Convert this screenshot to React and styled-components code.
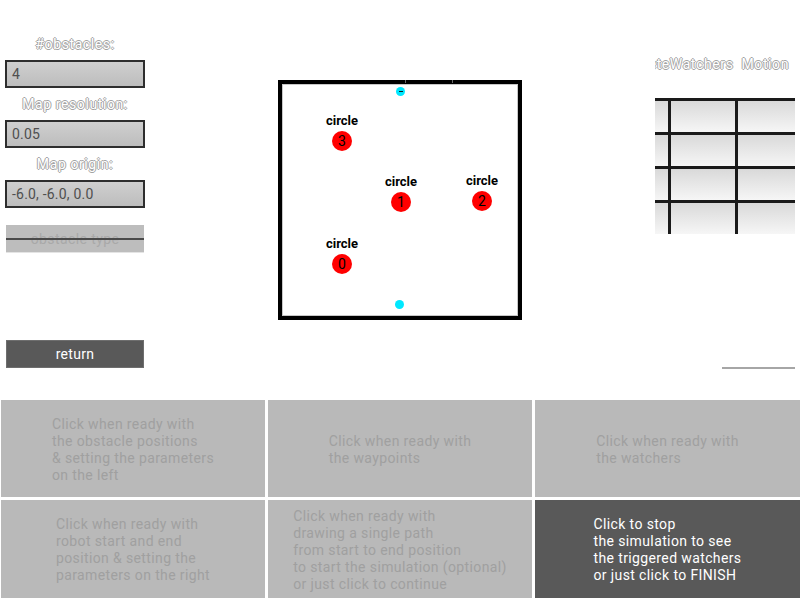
import React from 'react';
import styled, { createGlobalStyle } from 'styled-components';

const GlobalStyle = createGlobalStyle`
  html, body {
    margin: 0;
    padding: 0;
    background: #ffffff;
    font-family: Roboto, "Liberation Sans", sans-serif;
  }
`;

const obstacles = [
  { id: 3, x: 60, y: 57 },
  { id: 1, x: 119, y: 118 },
  { id: 2, x: 200, y: 117 },
  { id: 0, x: 60, y: 180 },
];

const waypoints = [
  { id: 'start', x: 119, y: 8, mark: true },
  { id: 'end', x: 118, y: 221 },
];

const steps = [
  ['Click when ready with', 'the obstacle positions', '& setting the parameters', 'on the left'],
  ['Click when ready with', 'the waypoints'],
  ['Click when ready with', 'the watchers'],
  ['Click when ready with', 'robot start and end', 'position & setting the', 'parameters on the right'],
  ['Click when ready with', 'drawing a single path', 'from start to end position', 'to start the simulation (optional)', 'or just click to continue'],
  ['Click to stop', 'the simulation to see', 'the triggered watchers', 'or just click to FINISH'],
];

const App = () => {
  return (
    <Page>
      <GlobalStyle />
      <Top>
        <LeftPanel>
          <Field>
            <OutlinedLabel>#obstacles:</OutlinedLabel>
            <Input>4</Input>
          </Field>
          <Field>
            <OutlinedLabel>Map resolution:</OutlinedLabel>
            <Input>0.05</Input>
          </Field>
          <Field>
            <OutlinedLabel>Map origin:</OutlinedLabel>
            <Input>-6.0, -6.0, 0.0</Input>
          </Field>
          <TypeButton>obstacle type</TypeButton>
          <ReturnButton>return</ReturnButton>
        </LeftPanel>

        <Center>
          <Map>
            <Tick style={{ left: 123 }} />
            <Tick style={{ left: 170 }} />
            {obstacles.map(o => (
              <Obstacle key={o.id} style={{ left: o.x, top: o.y }}>
                <ObstacleName>circle</ObstacleName>
                <ObstacleDot>{o.id}</ObstacleDot>
              </Obstacle>
            ))}
            {waypoints.map(w => (
              <Waypoint key={w.id} style={{ left: w.x, top: w.y }}>
                {w.mark && <WaypointMark />}
              </Waypoint>
            ))}
          </Map>
        </Center>

        <RightPanel>
          <Header>
            <OutlinedLabel as="span">deleteWatchers</OutlinedLabel>
            <OutlinedLabel as="span">Motion</OutlinedLabel>
          </Header>
          <Table>
            {Array.from({ length: 12 }).map((_, i) => (
              <Cell key={i} />
            ))}
          </Table>
          <Rule />
        </RightPanel>
      </Top>

      <Steps>
        {steps.map((lines, i) => (
          <StepButton key={i} active={i === 5}>
            <StepText>
              {lines.map(l => (
                <div key={l}>{l}</div>
              ))}
            </StepText>
          </StepButton>
        ))}
      </Steps>
    </Page>
  );
};

const Page = styled.div`
  width: 800px;
  height: 600px;
  display: flex;
  flex-direction: column;
  overflow: hidden;
`;

const Top = styled.div`
  height: 399px;
  display: grid;
  grid-template-columns: 150px 1fr 150px;
`;

const LeftPanel = styled.div`
  display: flex;
  flex-direction: column;
  padding-top: 28px;
`;

const Field = styled.div`
  display: flex;
  flex-direction: column;
`;

const OutlinedLabel = styled.div`
  height: 32px;
  display: flex;
  align-items: center;
  justify-content: center;
  font-size: 14px;
  letter-spacing: 0.6px;
  color: #ffffff;
  text-shadow: 1px 0 #a4a4a4, -1px 0 #a4a4a4, 0 1px #a4a4a4, 0 -1px #a4a4a4;
`;

const Input = styled.div`
  margin-left: 5px;
  width: 140px;
  height: 28px;
  box-sizing: border-box;
  border: 2px solid #2e2e2e;
  background: linear-gradient(#cfcfcf, #bdbdbd);
  color: #4f4f4f;
  font-size: 14px;
  letter-spacing: 0.2px;
  display: flex;
  align-items: center;
  padding-left: 5px;
`;

const TypeButton = styled.div`
  position: relative;
  margin: 17px 0 0 6px;
  width: 138px;
  height: 27px;
  background: #bdbdbd;
  border-bottom: 1px solid #e4e4e4;
  color: #a9a9a9;
  font-size: 14px;
  letter-spacing: 0.4px;
  display: flex;
  align-items: center;
  justify-content: center;

  &::after {
    content: '';
    position: absolute;
    left: 0;
    right: 0;
    top: 13px;
    height: 2px;
    background: #4a4a4a;
  }
`;

const ReturnButton = styled.div`
  margin: 87px 0 0 6px;
  width: 138px;
  height: 28px;
  box-sizing: border-box;
  background: #595959;
  border: 1px solid #6e6e6e;
  color: #ffffff;
  font-size: 14px;
  letter-spacing: 0.3px;
  display: flex;
  align-items: center;
  justify-content: center;
`;

const Center = styled.div`
  display: flex;
  justify-content: center;
  padding-top: 80px;
`;

const Map = styled.div`
  position: relative;
  width: 244px;
  height: 240px;
  box-sizing: border-box;
  border: 4px solid #000000;
  background: #ffffff;
  box-shadow: inset 1px 1px 0 #c8c8c8, inset -1px -1px 0 #c8c8c8;
`;

const Tick = styled.div`
  position: absolute;
  top: -4px;
  width: 1px;
  height: 3px;
  background: #6a6a6a;
`;

const Obstacle = styled.div`
  position: absolute;
  width: 0;
  height: 0;
`;

const ObstacleName = styled.div`
  position: absolute;
  left: -30px;
  width: 60px;
  top: -28px;
  text-align: center;
  font-size: 13px;
  font-weight: bold;
  color: #000000;
`;

const ObstacleDot = styled.div`
  position: absolute;
  left: -10px;
  top: -10px;
  width: 20px;
  height: 20px;
  border-radius: 50%;
  background: #ff0000;
  color: #000000;
  font-size: 14px;
  display: flex;
  align-items: center;
  justify-content: center;
`;

const Waypoint = styled.div`
  position: absolute;
  width: 9px;
  height: 9px;
  margin: -5px 0 0 -5px;
  border-radius: 50%;
  background: #00e8ff;
  display: flex;
  align-items: center;
  justify-content: center;
`;

const WaypointMark = styled.div`
  width: 4px;
  height: 1px;
  background: #1a1a1a;
`;

const RightPanel = styled.div`
  display: flex;
  flex-direction: column;
  padding-top: 48px;
  overflow: hidden;
  margin-left: 5px;
`;

const Header = styled.div`
  display: flex;
  justify-content: flex-end;
  gap: 8px;
  padding-right: 11px;
  white-space: nowrap;
  overflow: hidden;
`;

const Table = styled.div`
  margin-top: 18px;
  width: 140px;
  display: grid;
  grid-template-columns: 13px 64px 57px;
  grid-auto-rows: 31px;
  gap: 3px;
  padding-top: 3px;
  background: #1a1a1a;
`;

const Cell = styled.div`
  background: linear-gradient(#d9d9d9, #f6f6f6);
`;

const Rule = styled.div`
  margin: 133px 0 0 67px;
  width: 73px;
  height: 2px;
  background: #a6a6a6;
`;

const Steps = styled.div`
  flex: 1;
  display: grid;
  grid-template-columns: 264px 264px 1fr;
  grid-template-rows: 97px 98px;
  gap: 3px;
  padding: 1px 0 0 1px;
  background: #ffffff;
`;

const StepButton = styled.div`
  background: ${props => (props.active ? '#595959' : '#b9b9b9')};
  color: ${props => (props.active ? '#ffffff' : '#a0a0a0')};
  display: flex;
  align-items: center;
  justify-content: center;
  font-size: 14px;
  line-height: 17px;
  letter-spacing: 0.38px;
  padding-top: 2px;
`;

const StepText = styled.div`
  text-align: left;
`;

export default App;
